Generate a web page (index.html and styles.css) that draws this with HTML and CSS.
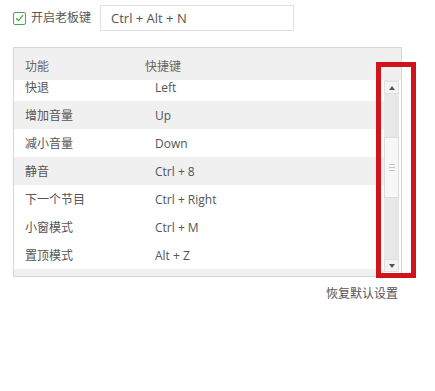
FILE: index.html
```html
<!DOCTYPE html>
<html lang="zh-CN">
<head>
    <meta charset="UTF-8">
    <title>快捷键设置</title>
    <link rel="stylesheet" href="styles.css">
</head>
<body>
    <div class="page">
        <div class="boss-key">
            <label class="check">
                <span class="check-box">
                    <svg width="9" height="8" viewBox="0 0 9 8"><path d="M1 4.2 L3.6 6.6 L8 1.2" fill="none" stroke="#4aa84a" stroke-width="1.3"/></svg>
                </span>
                <span class="check-text">开启老板键</span>
            </label>
            <div class="key-input">Ctrl + Alt + N</div>
        </div>

        <div class="panel">
            <div class="panel-head">
                <span class="col-name">功能</span>
                <span class="col-key">快捷键</span>
            </div>
            <div class="panel-body">
                <div class="list">
                    <div class="row first"><span class="col-name">快退</span><span class="col-key">Left</span></div>
                    <div class="row gray"><span class="col-name">增加音量</span><span class="col-key">Up</span></div>
                    <div class="row"><span class="col-name">减小音量</span><span class="col-key">Down</span></div>
                    <div class="row gray"><span class="col-name">静音</span><span class="col-key">Ctrl + 8</span></div>
                    <div class="row"><span class="col-name">下一个节目</span><span class="col-key">Ctrl + Right</span></div>
                    <div class="row"><span class="col-name">小窗模式</span><span class="col-key">Ctrl + M</span></div>
                    <div class="row"><span class="col-name">置顶模式</span><span class="col-key">Alt + Z</span></div>
                    <div class="row gray"><span class="col-name"></span><span class="col-key"></span></div>
                </div>
                <div class="scrollbar">
                    <div class="sb-btn"><span class="arrow-up"></span></div>
                    <div class="sb-track">
                        <div class="sb-thumb"><span></span><span></span><span></span></div>
                    </div>
                    <div class="sb-btn"><span class="arrow-down"></span></div>
                </div>
            </div>
            <div class="highlight"></div>
        </div>

        <div class="reset">恢复默认设置</div>
    </div>
</body>
</html>
```

FILE: styles.css
```css
/* General */
body {
    margin: 0;
    background-color: #fff;
    font-family: "Open Sans", "Noto Sans CJK SC", sans-serif;
    color: #555;
}

.page {
    padding: 5px 0 0 13px;
    width: 389px;
}

/* Boss key line */
.boss-key {
    display: flex;
    align-items: center;
    height: 26px;
}
.check {
    display: flex;
    align-items: center;
    width: 87px;
}
.check-box {
    width: 11px;
    height: 11px;
    border: 1px solid #4aa84a;
    border-radius: 2px;
    display: flex;
    align-items: center;
    justify-content: center;
}
.check-text {
    margin-left: 5px;
    font-size: 12px;
    line-height: 14px;
}
.key-input {
    box-sizing: border-box;
    width: 194px;
    height: 26px;
    border: 1px solid #e2e2e2;
    padding-left: 10px;
    font-size: 13px;
    line-height: 24px;
    color: #555;
}

/* Shortcut table */
.panel {
    position: relative;
    margin-top: 16px;
    height: 230px;
    box-sizing: border-box;
    border: 1px solid #d6d6d6;
}
.panel-head {
    display: flex;
    align-items: center;
    height: 32px;
    background-color: #f0f0f0;
    font-size: 12px;
    color: #666;
    padding-top: 4px;
    box-sizing: border-box;
}
.col-name {
    width: 120px;
    padding-left: 11px;
}
.row .col-key {
    margin-left: 10px;
}

.panel-body {
    display: flex;
    height: 196px;
}
.list {
    flex: 1;
    overflow: hidden;
}
.row {
    display: flex;
    align-items: center;
    height: 28px;
    font-size: 12px;
    color: #555;
}
.row.first {
    margin-top: -7px;
}
.row.gray {
    background-color: #f0f0f0;
}

/* Scrollbar */
.scrollbar {
    width: 15px;
    margin-right: 2px;
    height: 192px;
    background-color: #e8e8e8;
    display: flex;
    flex-direction: column;
    align-items: center;
    padding-top: 1px;
    box-sizing: border-box;
}
.sb-btn {
    width: 13px;
    height: 11px;
    background-color: #f3f3f3;
    border: 1px solid #e0e0e0;
    display: flex;
    align-items: center;
    justify-content: center;
}
.arrow-up {
    border-left: 3px solid transparent;
    border-right: 3px solid transparent;
    border-bottom: 4px solid #555;
}
.arrow-down {
    border-left: 3px solid transparent;
    border-right: 3px solid transparent;
    border-top: 4px solid #555;
}
.sb-track {
    flex: 1;
    width: 100%;
    padding-top: 43px;
    box-sizing: border-box;
    display: flex;
    justify-content: center;
}
.sb-thumb {
    width: 13px;
    height: 59px;
    background-color: #f7f7f7;
    border: 1px solid #dcdcdc;
    display: flex;
    flex-direction: column;
    align-items: center;
    justify-content: center;
    gap: 2px;
}
.sb-thumb span {
    width: 6px;
    height: 1px;
    background-color: #c4c4c4;
}

/* Red annotation box */
.highlight {
    position: absolute;
    left: 362px;
    top: 14px;
    width: 30px;
    height: 206px;
    border: 5px solid #d0141b;
}

.reset {
    text-align: right;
    margin-top: 9px;
    padding-right: 4px;
    font-size: 12px;
    line-height: 16px;
    color: #555;
}
```
